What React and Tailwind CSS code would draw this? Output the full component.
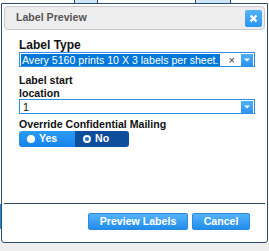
import React from 'react';

function DropButton() {
  return (
    <div className="w-[12px] h-[12px] mr-[1px] flex items-center justify-center bg-gradient-to-b from-[#4fb0f8] to-[#2b93ee]">
      <svg width="6" height="4" viewBox="0 0 6 4"><path d="M0 0.5h6L3 3.5z" fill="#fff" /></svg>
    </div>
  );
}

function Radio({ checked }) {
  return (
    <span className="w-[8px] h-[8px] rounded-full bg-white flex items-center justify-center">
      {checked && <span className="w-[4px] h-[4px] rounded-full bg-[#1a6fd0]" />}
    </span>
  );
}

export default function App() {
  return (
    <div className="relative w-[269px] h-[251px] bg-white overflow-hidden" style={{ fontFamily: '"Liberation Sans", Arial, sans-serif' }}>
      {/* page behind the dialog */}
      <div className="absolute left-[74px] top-0 w-[24px] h-[4px] bg-[#cfe5fb] border-x border-[#2d4b70]" />
      <div className="absolute left-[195px] top-0 w-[36px] h-[4px] bg-[#cfe5fb] border-x border-[#2d4b70]" />
      <div className="absolute left-0 top-[204px] w-[2px] h-[25px] bg-[#1e88e5]" />
      <div className="absolute left-0 top-[243px] w-full h-[8px] bg-[#eeeeee]" />

      {/* dialog */}
      <div className="absolute left-[1px] top-[3px] w-[267px] h-[240px] bg-white border border-[#2d4b70] rounded-b-[3px] flex flex-col px-[2px] pt-[2px]">
        <div className="h-[24px] flex items-center justify-between border border-[#c9c9c9] rounded-[4px] bg-[#ededed] pl-[11px] pr-[2px]">
          <span className="text-[10.6px] font-bold text-[#555555]">Label Preview</span>
          <button className="w-[17px] h-[17px] rounded-[2px] bg-gradient-to-b from-[#52b2f8] to-[#2a93ee] flex items-center justify-center">
            <svg width="9" height="9" viewBox="0 0 9 9"><path d="M1.5 1.5l6 6M7.5 1.5l-6 6" stroke="#fff" strokeWidth="2.2" /></svg>
          </button>
        </div>

        <div className="flex flex-col pl-[15px] pr-[14px] pt-[8px] text-[10.6px] text-[#111]">
          <label className="font-bold text-[12px] leading-[14px]">Label Type</label>
          <div className="h-[15px] w-[236px] border border-[#2f8fe6] bg-white flex items-center">
            <span className="ml-[1px] h-[12px] leading-[12px] px-[1px] bg-[#0078d7] text-white whitespace-nowrap">Avery 5160 prints 10 X 3 labels per sheet.</span>
            <span className="ml-auto mr-[6px] text-[11px] text-[#333] leading-[12px]">×</span>
            <DropButton />
          </div>

          <label className="font-bold mt-[7px] w-[80px] leading-[12.5px]">Label start location</label>
          <div className="h-[15px] w-[236px] border border-[#2f8fe6] bg-white flex items-center">
            <span className="ml-[3px] leading-[12px]">1</span>
            <span className="ml-auto" />
            <DropButton />
          </div>

          <label className="font-bold mt-[4px] leading-[13px]">Override Confidential Mailing</label>
          <div className="h-[16px] w-[110px] flex rounded-[3px] overflow-hidden text-white font-bold">
            <div className="w-[56px] flex items-center gap-[4px] pl-[8px] bg-gradient-to-b from-[#2b9cf6] to-[#1583ea]">
              <Radio />
              <span>Yes</span>
            </div>
            <div className="flex-1 flex items-center gap-[4px] pl-[8px] bg-[#0c4d9c]">
              <Radio checked />
              <span>No</span>
            </div>
          </div>
        </div>

        <div className="mt-auto border-t border-[#2d4b70] mb-[9px]" />
        <div className="flex justify-end gap-[4px] pr-[15px] mb-[12px]">
          <button className="w-[100px] h-[17px] rounded-[2px] border border-[#2a8ae0] bg-gradient-to-b from-[#54b4f9] to-[#1f8cec] text-white text-[10.6px] font-bold leading-[15px]">Preview Labels</button>
          <button className="w-[58px] h-[17px] rounded-[2px] border border-[#2a8ae0] bg-gradient-to-b from-[#54b4f9] to-[#1f8cec] text-white text-[10.6px] font-bold leading-[15px]">Cancel</button>
        </div>
      </div>
    </div>
  );
}
